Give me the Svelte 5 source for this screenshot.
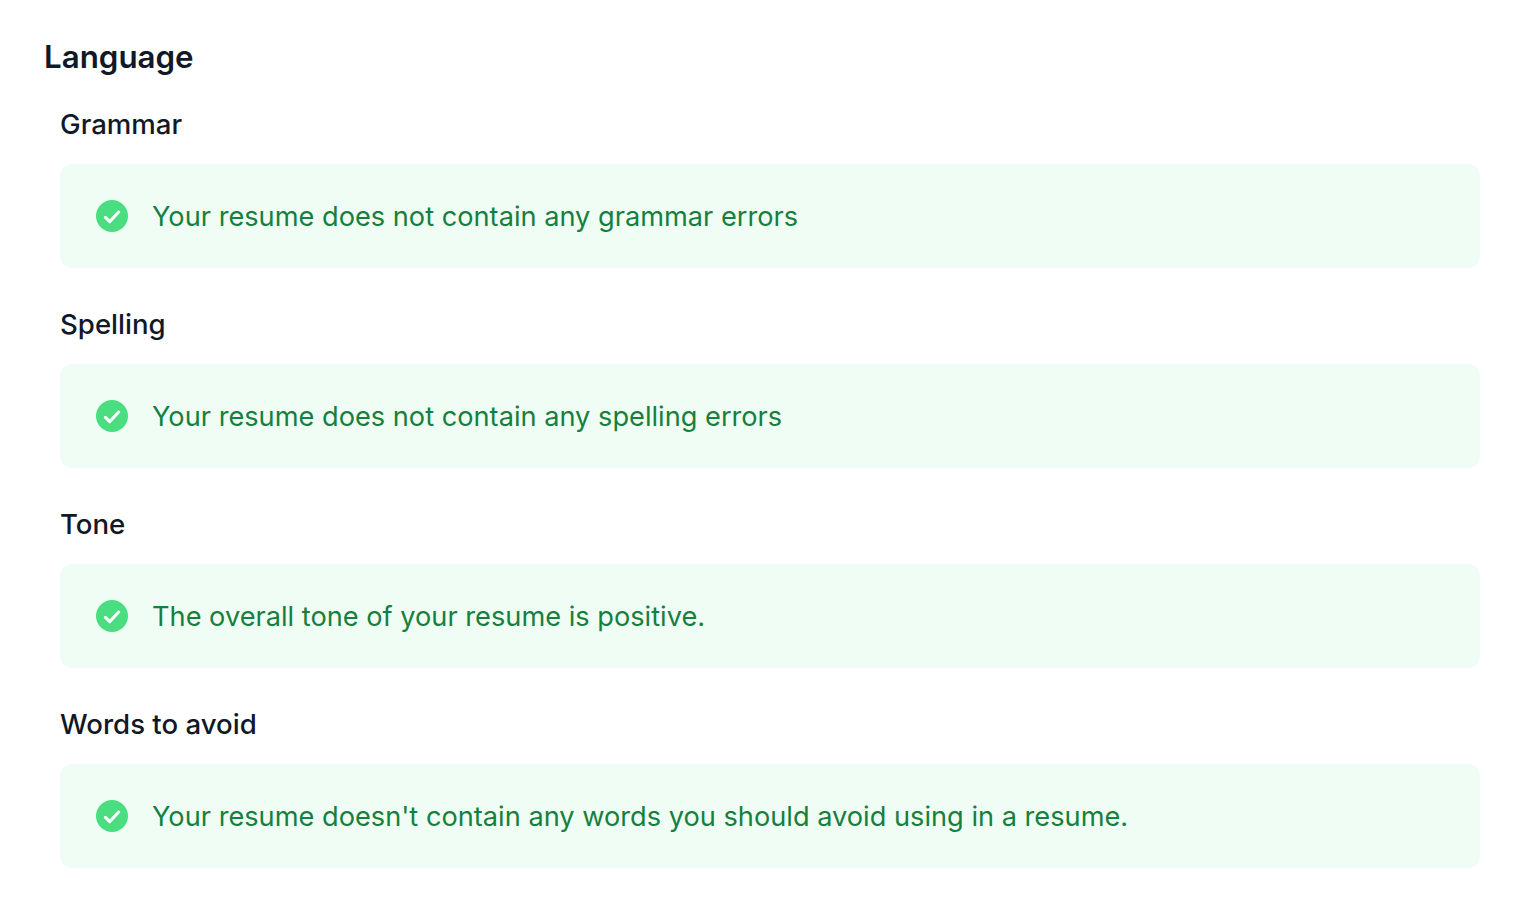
<script lang="ts">
  const sections = [
    { title: "Grammar", message: "Your resume does not contain any grammar errors" },
    { title: "Spelling", message: "Your resume does not contain any spelling errors" },
    { title: "Tone", message: "The overall tone of your resume is positive." },
    { title: "Words to avoid", message: "Your resume doesn't contain any words you should avoid using in a resume." },
  ];
</script>

<div class="page">
  <h2 class="heading">Language</h2>
  <div class="sections">
    {#each sections as section}
      <div class="section">
        <h3 class="title">{section.title}</h3>
        <div class="alert">
          <svg class="check" viewBox="0 0 32 32" aria-hidden="true">
            <circle cx="16" cy="16" r="16" fill="#4ade80" />
            <path d="M9.4 17.4l4.3 4.2 9-9.6" fill="none" stroke="#fff" stroke-width="3" stroke-linecap="round" stroke-linejoin="round" />
          </svg>
          <p class="message">{section.message}</p>
        </div>
      </div>
    {/each}
  </div>
</div>

<style>
  :global(body) {
    background: #fff;
    font-family: Inter, "Liberation Sans", sans-serif;
  }

  .page {
    padding: 36px 54px 0 44px;
  }

  .heading {
    margin: 0;
    font-size: 31.3px;
    line-height: 42px;
    font-weight: 600;
    color: #111827;
  }

  .sections {
    display: flex;
    flex-direction: column;
    padding-left: 16px;
    margin-top: 26px;
    gap: 36px;
  }

  .title {
    margin: 0;
    font-size: 27.6px;
    line-height: 40px;
    font-weight: 500;
    color: #111827;
  }

  .alert {
    display: flex;
    align-items: center;
    gap: 24px;
    margin-top: 20px;
    padding: 32px 36px;
    height: 104px;
    box-sizing: border-box;
    border-radius: 12px;
    background: #f0fdf4;
  }

  .check {
    width: 32px;
    height: 32px;
    flex-shrink: 0;
  }

  .message {
    margin: 0;
    padding-top: 2px;
    font-size: 27.2px;
    line-height: 40px;
    font-weight: 400;
    color: #15803d;
  }
</style>
